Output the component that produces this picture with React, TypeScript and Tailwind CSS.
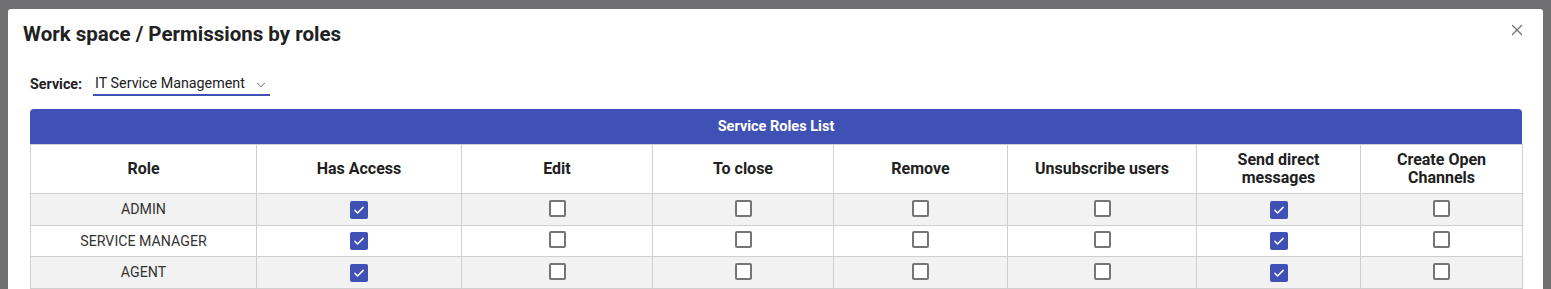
import { X, ChevronDown } from "lucide-react";

const columns = [
  { label: "Role", w: "w-[226px]" },
  { label: "Has Access", w: "w-[205px]" },
  { label: "Edit", w: "w-[191px]" },
  { label: "To close", w: "w-[181px]" },
  { label: "Remove", w: "w-[174px]" },
  { label: "Unsubscribe users", w: "w-[189px]" },
  { label: "Send direct messages", w: "w-[164px]" },
  { label: "Create Open Channels", w: "w-[162px]" },
];

const rows = [
  { role: "ADMIN", perms: [true, false, false, false, false, true, false] },
  { role: "SERVICE MANAGER", perms: [true, false, false, false, false, true, false] },
  { role: "AGENT", perms: [true, false, false, false, false, true, false] },
];

function Checkbox({ checked }: { checked: boolean }) {
  if (checked) {
    return (
      <span className="inline-flex h-[18px] w-[18px] items-center justify-center rounded-[2px] bg-[#3f51b5]">
        <svg viewBox="0 0 24 24" className="h-[14px] w-[14px]" fill="none" stroke="white" strokeWidth="2.6" strokeLinecap="round" strokeLinejoin="round">
          <path d="M5 12.5l4.5 4.5L19 7.5" />
        </svg>
      </span>
    );
  }
  return <span className="inline-block h-[17px] w-[17px] rounded-[2px] border-2 border-[#757575] bg-white" />;
}

export default function App() {
  return (
    <div className="h-[289px] w-[1551px] overflow-hidden bg-[#707073] font-['Roboto',sans-serif] pl-[8px] pt-[9px]">
      <div className="relative h-[300px] w-[1535px] rounded-t-[3px] bg-white">
        <button className="absolute right-[17px] top-[12px] text-[#757575]">
          <X size={18} strokeWidth={1.6} />
        </button>
        <h2 className="pl-[15px] pt-[12px] text-[20.5px] font-bold leading-[26px] text-[#212121]">
          Work space / Permissions by roles
        </h2>
        <div className="mt-[26px] flex items-center pl-[22px] text-[14.3px] text-[#212121]">
          <span className="font-bold">Service:</span>
          <div className="ml-[11px] flex w-[177px] items-center border-b-2 border-[#3f51b5] pb-[0px] pl-[2px]">
            <span>IT Service Management</span>
            <ChevronDown size={14} strokeWidth={1.6} className="ml-[9px] mt-[2px] text-[#555]" />
          </div>
        </div>
        <div className="ml-[22px] mt-[13px] w-[1492px]">
          <div className="flex h-[35px] items-center justify-center rounded-t-[4px] bg-[#3f51b5] text-[14.5px] font-bold text-white">
            Service Roles List
          </div>
          <table className="w-[1492px] table-fixed border-collapse">
            <thead>
              <tr className="h-[49px] bg-white">
                {columns.map((c) => (
                  <th
                    key={c.label}
                    className={`${c.w} border border-[#cfcfcf] px-[8px] text-center text-[16px] font-bold leading-[18px] text-[#212121]`}
                  >
                    {c.label === "Send direct messages" ? (
                      <>Send direct<br />messages</>
                    ) : c.label === "Create Open Channels" ? (
                      <>Create Open<br />Channels</>
                    ) : (
                      c.label
                    )}
                  </th>
                ))}
              </tr>
            </thead>
            <tbody>
              {rows.map((r, i) => (
                <tr key={r.role} className={`h-[31.5px] ${i % 2 === 0 ? "bg-[#f2f2f2]" : "bg-white"}`}>
                  <td className="border border-[#cfcfcf] text-center text-[14.2px] text-[#333]">{r.role}</td>
                  {r.perms.map((p, j) => (
                    <td key={j} className="border border-[#cfcfcf] text-center align-middle">
                      <span className="inline-flex translate-y-[2px]">
                        <Checkbox checked={p} />
                      </span>
                    </td>
                  ))}
                </tr>
              ))}
            </tbody>
          </table>
        </div>
      </div>
    </div>
  );
}
